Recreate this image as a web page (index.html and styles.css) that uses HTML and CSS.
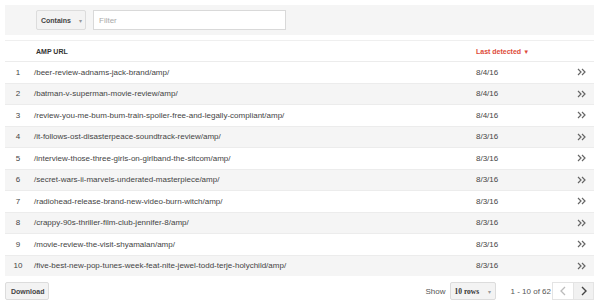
FILE: index.html
```html
<!DOCTYPE html>
<html>
<head>
<meta charset="utf-8">
<link rel="stylesheet" href="styles.css">
</head>
<body>
<div class="page">
  <div class="filterbar">
    <div class="btn contains">Contains <span class="caret">▾</span></div>
    <div class="filter">Filter</div>
  </div>
  <div class="table">
    <div class="row head">
      <div class="num"></div>
      <div class="url">AMP URL</div>
      <div class="date sort">Last detected<span class="tri">▼</span></div>
      <div class="go"></div>
    </div>
    <div class="row"><div class="num">1</div><div class="url">/beer-review-adnams-jack-brand/amp/</div><div class="date">8/4/16</div><div class="go"><svg width="10" height="8" viewBox="0 0 10 8"><path d="M1 1l3 3-3 3M5 1l3 3-3 3" fill="none" stroke="#666" stroke-width="1.2"/></svg></div></div>
    <div class="row"><div class="num">2</div><div class="url">/batman-v-superman-movie-review/amp/</div><div class="date">8/4/16</div><div class="go"><svg width="10" height="8" viewBox="0 0 10 8"><path d="M1 1l3 3-3 3M5 1l3 3-3 3" fill="none" stroke="#666" stroke-width="1.2"/></svg></div></div>
    <div class="row"><div class="num">3</div><div class="url">/review-you-me-bum-bum-train-spoiler-free-and-legally-compliant/amp/</div><div class="date">8/4/16</div><div class="go"><svg width="10" height="8" viewBox="0 0 10 8"><path d="M1 1l3 3-3 3M5 1l3 3-3 3" fill="none" stroke="#666" stroke-width="1.2"/></svg></div></div>
    <div class="row"><div class="num">4</div><div class="url">/it-follows-ost-disasterpeace-soundtrack-review/amp/</div><div class="date">8/3/16</div><div class="go"><svg width="10" height="8" viewBox="0 0 10 8"><path d="M1 1l3 3-3 3M5 1l3 3-3 3" fill="none" stroke="#666" stroke-width="1.2"/></svg></div></div>
    <div class="row"><div class="num">5</div><div class="url">/interview-those-three-girls-on-girlband-the-sitcom/amp/</div><div class="date">8/3/16</div><div class="go"><svg width="10" height="8" viewBox="0 0 10 8"><path d="M1 1l3 3-3 3M5 1l3 3-3 3" fill="none" stroke="#666" stroke-width="1.2"/></svg></div></div>
    <div class="row"><div class="num">6</div><div class="url">/secret-wars-ii-marvels-underated-masterpiece/amp/</div><div class="date">8/3/16</div><div class="go"><svg width="10" height="8" viewBox="0 0 10 8"><path d="M1 1l3 3-3 3M5 1l3 3-3 3" fill="none" stroke="#666" stroke-width="1.2"/></svg></div></div>
    <div class="row"><div class="num">7</div><div class="url">/radiohead-release-brand-new-video-burn-witch/amp/</div><div class="date">8/3/16</div><div class="go"><svg width="10" height="8" viewBox="0 0 10 8"><path d="M1 1l3 3-3 3M5 1l3 3-3 3" fill="none" stroke="#666" stroke-width="1.2"/></svg></div></div>
    <div class="row"><div class="num">8</div><div class="url">/crappy-90s-thriller-film-club-jennifer-8/amp/</div><div class="date">8/3/16</div><div class="go"><svg width="10" height="8" viewBox="0 0 10 8"><path d="M1 1l3 3-3 3M5 1l3 3-3 3" fill="none" stroke="#666" stroke-width="1.2"/></svg></div></div>
    <div class="row"><div class="num">9</div><div class="url">/movie-review-the-visit-shyamalan/amp/</div><div class="date">8/3/16</div><div class="go"><svg width="10" height="8" viewBox="0 0 10 8"><path d="M1 1l3 3-3 3M5 1l3 3-3 3" fill="none" stroke="#666" stroke-width="1.2"/></svg></div></div>
    <div class="row"><div class="num">10</div><div class="url">/five-best-new-pop-tunes-week-feat-nite-jewel-todd-terje-holychild/amp/</div><div class="date">8/3/16</div><div class="go"><svg width="10" height="8" viewBox="0 0 10 8"><path d="M1 1l3 3-3 3M5 1l3 3-3 3" fill="none" stroke="#666" stroke-width="1.2"/></svg></div></div>
  </div>
  <div class="footer">
    <div class="btn download">Download</div>
    <div class="pager">
      <span class="show">Show</span>
      <div class="btn rows">10 rows <span class="caret">▾</span></div>
      <span class="count">1 - 10 of 62</span>
      <div class="nav">
        <div class="navbtn prev"><svg width="8" height="10" viewBox="0 0 8 10"><path d="M6 1L2 5l4 4" fill="none" stroke="#bbb" stroke-width="1.3"/></svg></div>
        <div class="navbtn next"><svg width="8" height="10" viewBox="0 0 8 10"><path d="M2 1l4 4-4 4" fill="none" stroke="#444" stroke-width="1.4"/></svg></div>
      </div>
    </div>
  </div>
</div>
</body>
</html>
```

FILE: styles.css
```css
html, body { margin: 0; padding: 0; background: #fff; }
body { font-family: "Liberation Sans", Arial, sans-serif; color: #333; }
.page { padding: 5px 6px 0 5px; }
.filterbar {
  background: #f5f5f5;
  height: 30px;
  display: flex;
  align-items: center;
  padding-left: 31px;
  gap: 7px;
}
.btn {
  box-sizing: border-box;
  background: #f3f3f3;
  border: 1px solid #dcdcdc;
  border-radius: 2px;
  height: 20px;
  display: flex;
  align-items: center;
  font-size: 8px;
  font-weight: bold;
  color: #444;
  white-space: nowrap;
}
.contains { width: 50px; padding-left: 4px; font-size: 7px; }
.caret { color: #999; font-size: 6px; font-weight: normal; margin-left: 8px; }
.filter {
  box-sizing: border-box;
  width: 193px;
  height: 20px;
  border: 1px solid #d9d9d9;
  background: #fff;
  font-size: 8px;
  color: #aaa;
  display: flex;
  align-items: center;
  padding-left: 5px;
}
.table { margin-top: 5px; border-top: 1px solid #efefef; }
.row {
  display: flex;
  align-items: center;
  height: 21.5px;
  box-sizing: border-box;
  border-top: 1px solid #ececec;
  font-size: 8px;
  color: #444;
}
.row:nth-child(odd) { background: #f5f5f5; }
.row.head { height: 20px; border-top: none; background: #fff; font-size: 7px; font-weight: bold; color: #333; }
.num { width: 26px; text-align: center; flex: none; }
.url { padding-left: 3px; flex: 1; white-space: nowrap; overflow: hidden; }
.head .url { padding-left: 5px; }
.date { width: 101px; flex: none; }
.sort { color: #dd4b39; }
.tri { font-size: 6px; margin-left: 2px; }
.go { width: 17px; flex: none; display: flex; align-items: center; }
.footer {
  display: flex;
  justify-content: space-between;
  align-items: center;
  margin-top: 6px;
}
.download { width: 44px; height: 18px; padding-left: 5px; font-size: 7px; }
.pager { display: flex; align-items: center; font-size: 8px; color: #555; }
.show { margin-right: 4px; }
.rows { width: 46px; height: 18px; padding-left: 4px; font-size: 7.5px; font-family: "Liberation Serif", serif; color: #333; }
.rows .caret { margin-left: 9px; font-family: "Liberation Sans", sans-serif; }
.count { margin-left: 15px; margin-right: 1px; }
.nav { display: flex; }
.navbtn {
  box-sizing: border-box;
  width: 21px;
  height: 18px;
  border: 1px solid #e4e4e4;
  display: flex;
  align-items: center;
  justify-content: center;
}
.prev { background: #fff; border-right: none; }
.next { background: #f1f1f1; }
```
